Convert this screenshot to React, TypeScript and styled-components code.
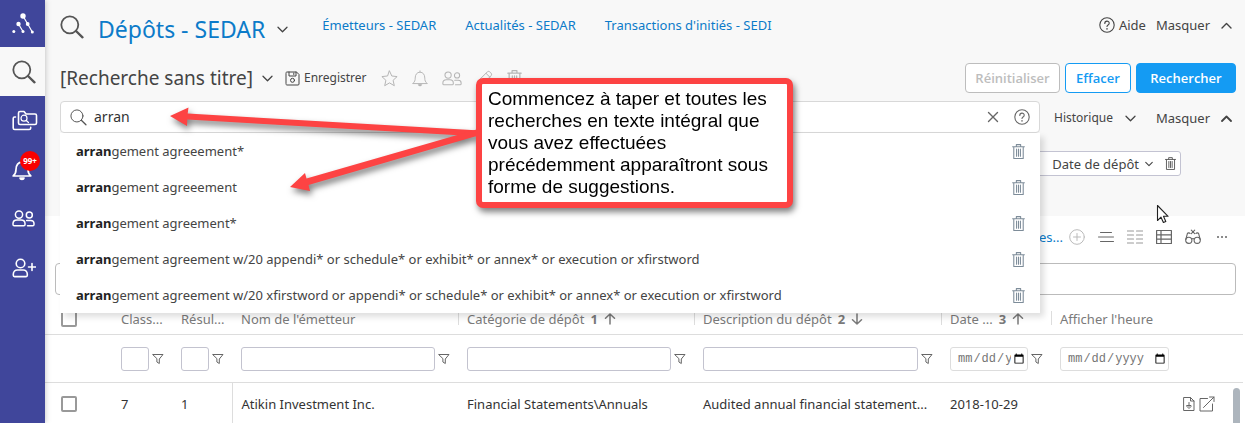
import React, { useState } from "react";
import styled, { createGlobalStyle, css } from "styled-components";

const ui = `"Noto Sans", "Open Sans", sans-serif`;

const GlobalStyle = createGlobalStyle`
  *, *::before, *::after { box-sizing: border-box; }
  body { margin: 0; background: #fff; color: #444; font: 13px/18px ${ui}; }
  button, input { font: inherit; color: inherit; margin: 0; }
  a { text-decoration: none; }
`;

const Shell = styled.div`
  display: flex;
  height: 100vh;
  overflow: hidden;
`;

/* ---------- sidebar ---------- */

const Sidebar = styled.nav`
  display: flex;
  flex-direction: column;
  flex: none;
  width: 45px;
  background: #40469b;
  box-shadow: 0 0 6px rgba(0, 0, 0, 0.25);
  z-index: 1;
`;

const SideItem = styled.a<{ $active?: boolean }>`
  position: relative;
  display: flex;
  align-items: center;
  padding-left: 12px;
  height: 49px;
  color: ${(p) => (p.$active ? "#555" : "#fff")};
  background: ${(p) => (p.$active ? "#f8f8f8" : "transparent")};
  &:first-child { height: 47px; }
`;

const Badge = styled.span`
  position: absolute;
  top: 6px;
  left: 20px;
  width: 20px;
  height: 20px;
  border-radius: 50%;
  background: #f80000;
  color: #fff;
  font-size: 8px;
  font-weight: 700;
  line-height: 20px;
  text-align: center;
`;

/* ---------- main area ---------- */

const Main = styled.main`
  position: relative;
  display: flex;
  flex: 1;
  flex-direction: column;
  min-width: 0;
`;

const SearchPanel = styled.section`
  flex: none;
  background: #f8f8f8;
  padding: 8px 9px 40px 15px;
`;

const TopBar = styled.header`
  display: flex;
  align-items: flex-start;
  height: 50px;
`;

const Title = styled.h1`
  margin: 0 3px 0 14px;
  color: #0c7bc9;
  font-size: 23px;
  font-weight: 400;
  line-height: 42px;
  white-space: nowrap;
`;

const TitleIcon = styled.span`
  display: flex;
  align-items: center;
  height: 38px;
  color: #555;
`;

const ChevronButton = styled.button<{ $height: number }>`
  display: flex;
  align-items: center;
  height: ${(p) => p.$height}px;
  padding: 0;
  margin-left: 9px;
  border: 0;
  background: none;
`;

const TopLinks = styled.nav`
  display: flex;
  gap: 29px;
  margin-left: 34px;
  line-height: 34px;
  white-space: nowrap;
  a { color: #0c7bc9; }
`;

const TopRight = styled.div`
  display: flex;
  gap: 10px;
  margin-left: auto;
  padding-right: 4px;
  height: 34px;
`;

const TextButton = styled.button<{ $gap?: number; $small?: boolean }>`
  display: flex;
  align-items: center;
  gap: ${(p) => p.$gap ?? 4}px;
  padding: 0;
  border: 0;
  background: none;
  color: #444;
  font-size: ${(p) => (p.$small ? 12 : 13)}px;
  white-space: nowrap;
`;

const RecordBar = styled.div`
  display: flex;
  align-items: center;
  height: 40px;
`;

const RecordName = styled.h2`
  margin: 0;
  font-size: 19px;
  font-weight: 400;
  line-height: 26px;
  white-space: nowrap;
`;

const RecordTools = styled.div`
  display: flex;
  align-items: center;
  gap: 14px;
  margin-left: 12px;
`;

const IconButton = styled.button<{ $color?: string }>`
  display: flex;
  align-items: center;
  justify-content: center;
  flex: none;
  padding: 0;
  border: 0;
  background: none;
  color: ${(p) => p.$color ?? "#666"};
`;

const Actions = styled.div`
  display: flex;
  gap: 5px;
  margin-left: auto;
`;

const actionKinds = {
  muted: css`border-color: #bdbdbd; color: #bdbdbd; background: #fff; width: 95px;`,
  outline: css`border-color: #149bf3; color: #149bf3; background: #fff; width: 66px;`,
  primary: css`border-color: #149bf3; color: #fff; background: #149bf3; width: 100px;`,
};

const ActionButton = styled.button<{ $kind: keyof typeof actionKinds }>`
  height: 30px;
  padding: 0;
  border: 1px solid;
  border-radius: 4px;
  font-family: "Open Sans", sans-serif;
  font-weight: 600;
  ${(p) => actionKinds[p.$kind]}
`;

const SearchRow = styled.div`
  display: flex;
  align-items: center;
  margin-top: 3px;
`;

const SearchField = styled.div`
  position: relative;
  display: flex;
  align-items: center;
  flex: 1;
  height: 32px;
  padding: 0 9px;
  border: 1px solid #d8d8d8;
  border-radius: 4px;
  background: #fff;
  color: #555;
`;

const SearchInput = styled.input`
  flex: 1;
  min-width: 0;
  padding: 0 7px;
  border: 0;
  outline: 0;
  background: none;
  font-size: 14px;
  color: #333;
`;

const FieldButtons = styled.div`
  display: flex;
  align-items: center;
  gap: 15px;
`;

const Suggestions = styled.ul`
  position: absolute;
  top: 31px;
  left: -1px;
  right: -1px;
  z-index: 2;
  margin: 0;
  padding: 0;
  list-style: none;
  background: #fff;
  box-shadow: 4px 4px 6px rgba(0, 0, 0, 0.13);
`;

const Suggestion = styled.li`
  display: flex;
  align-items: center;
  justify-content: space-between;
  height: 36px;
  padding: 0 15px 0 16px;
  color: #444;
  white-space: nowrap;
  b { color: #222; font-weight: 700; }
`;

const SearchSide = styled.div`
  display: flex;
  flex: none;
  align-items: center;
  justify-content: space-between;
  width: 182px;
  margin-left: 14px;
  padding: 2px 4px 0 0;
`;

const FilterRow = styled.div`
  display: flex;
  justify-content: flex-end;
  margin-top: 18px;
  padding-right: 55px;
`;

const FilterChip = styled.div`
  display: flex;
  align-items: center;
  justify-content: flex-end;
  width: 160px;
  height: 25px;
  padding: 0 4px;
  border: 1px solid #c3c3d2;
  border-radius: 3px;
  background: #fff;
  gap: 12px;
`;

/* ---------- results ---------- */

const ResultsBar = styled.div`
  display: flex;
  flex: none;
  align-items: center;
  justify-content: flex-end;
  gap: 13px;
  height: 42px;
  margin-bottom: 5px;
  padding-right: 15px;
`;

const ResultsLink = styled.a`
  margin-right: -7px;
  color: #0c7bc9;
`;

const ResultsInput = styled.input`
  flex: none;
  height: 32px;
  margin: 0 9px 0 10px;
  border: 1px solid #bbb;
  border-radius: 4px;
  background: #fff;
`;

const GridWrap = styled.div`
  position: relative;
  flex: 1;
  min-height: 0;
  margin: 7px 2px 0 0;
  overflow: hidden;
`;

const ScrollThumb = styled.div`
  position: absolute;
  top: 86px;
  right: 3px;
  bottom: -8px;
  width: 7px;
  border-radius: 4px;
  background: #adb5bd;
`;

const Grid = styled.table`
  width: 100%;
  border-collapse: collapse;
  table-layout: fixed;
  th, td { padding: 0 0 0 9px; text-align: left; white-space: nowrap; overflow: hidden; }
  th { padding-top: 3px; }
  th:first-child, td:first-child { padding-left: 16px; }
`;

const HeadRow = styled.tr`
  height: 32px;
  border-bottom: 1px solid #ddd;
  color: #7a7a7a;
  th { font-weight: 400; }
`;

const HeadCell = styled.th<{ $divider?: boolean }>`
  ${(p) =>
    p.$divider &&
    css`
      background: linear-gradient(#ddd, #ddd) left center / 1px 14px no-repeat;
    `}
`;

const HeadLabel = styled.span`
  display: flex;
  align-items: center;
  gap: 6px;
  b { font-weight: 700; }
`;

const FilterTr = styled.tr`
  height: 48px;
  border-bottom: 1px solid #ddd;
  td { padding-top: 2px; }
`;

const FilterCell = styled.div`
  display: flex;
  align-items: center;
  gap: 3px;
  color: #666;
`;

const FilterInput = styled.input<{ $width: number }>`
  flex: none;
  width: ${(p) => p.$width}px;
  height: 24px;
  padding: 0 4px;
  border: 1px solid #c3c3cf;
  border-radius: 3px;
  background: #fff;
`;

const DateInput = styled(FilterInput)`
  padding: 0 0 0 6px;
  border-color: #ddd;
  color: #757575;
  font: 12px "Liberation Mono", monospace;
`;

const DataRow = styled.tr`
  height: 43px;
  color: #333;
  td:nth-child(3) { border-right: 1px solid #ddd; }
`;

const RowActions = styled.div`
  display: flex;
  justify-content: flex-end;
  gap: 4px;
  padding-right: 28px;
`;

const Check = styled.input`
  display: block;
  appearance: none;
  width: 16px;
  height: 16px;
  border: 2px solid #999;
  border-radius: 2px;
  background: #fff;
`;

/* ---------- annotation ---------- */

const Annotation = styled.aside`
  position: absolute;
  top: 78px;
  left: 115px;
  z-index: 3;
  display: flex;
  filter: drop-shadow(2px 4px 3px rgba(0, 0, 0, 0.5));
  pointer-events: none;
`;

const Arrows = styled.svg`
  margin-right: -45px;
`;

const Callout = styled.p`
  width: 317px;
  margin: 0;
  padding: 4px 6px;
  border: 6px solid #fd4343;
  border-radius: 7px;
  background: #fff;
  color: #000;
  font: 19px/22px "Liberation Sans", Arial, sans-serif;
`;

const Pointer = styled.svg`
  position: absolute;
  top: 204px;
  left: 1111px;
  z-index: 4;
`;

/* ---------- icons ---------- */

type IconProps = { w: number; h?: number; vb?: string; sw?: number; children: React.ReactNode };
const Icon = ({ w, h = w, vb, sw = 1, children }: IconProps) => (
  <svg width={w} height={h} viewBox={vb ?? `0 0 ${w} ${h}`} fill="none" stroke="currentColor" strokeWidth={sw} strokeLinecap="round" strokeLinejoin="round" aria-hidden="true">
    {children}
  </svg>
);

const SearchIcon = ({ size, sw }: { size: number; sw: number }) => (
  <Icon w={size} vb="0 0 24 24" sw={sw}>
    <circle cx="9.8" cy="9.8" r="8.5" />
    <path d="M16 16l6.500 6.300" strokeWidth={sw * 1.3} />
  </Icon>
);
const Chevron = ({ up, size = 11, sw = 1.3 }: { up?: boolean; size?: number; sw?: number }) => (
  <Icon w={size} vb="0 0 11 11" sw={sw}>
    <path d={up ? "M1 8l4.5-4.5L10 8" : "M1 3.2l4.5 4.5L10 3.2"} />
  </Icon>
);
const HelpIcon = () => (
  <Icon w={16} sw={1.1}>
    <circle cx="8" cy="8" r="7.2" />
    <path d="M5.8 6.4c0-3 4.400-2.900 4.400-.2 0 1.800-2.200 1.700-2.200 3.300" />
    <path d="M8 11.700v.2" strokeWidth="1.500" />
  </Icon>
);
const TrashIcon = ({ w = 12, h = 14 }: { w?: number; h?: number }) => (
  <Icon w={w} h={h} vb="0 0 12 14">
    <path d="M.5 2.600h11M4 2.400V.6h4v1.800M1.600 2.800v10.700h8.800V2.800M4.200 4.800v6.600M6 4.800v6.600M7.800 4.800v6.600" />
  </Icon>
);
const PeopleIcon = ({ w, h, sw }: { w: number; h: number; sw: number }) => (
  <Icon w={w} h={h} vb="0 0 23 17" sw={sw}>
    <circle cx="7" cy="4.600" r="3.600" />
    <circle cx="17.300" cy="5" r="3" />
    <path d="M1 13.600C1 11 3 9.900 5 9.900h4c2 0 4 1.200 4 3.700v.9c0 .8-.4 1.300-1.200 1.300H2.200c-.8 0-1.200-.5-1.200-1.300z" />
    <path d="M14.600 10.400h4c2 0 3.400 1.200 3.400 3.200v.9c0 .8-.4 1.300-1.200 1.300h-5.300" />
  </Icon>
);
const BellIcon = ({ w, h, sw }: { w: number; h: number; sw: number }) => (
  <Icon w={w} h={h} vb="0 0 20 21" sw={sw}>
    <path d="M1.200 16.500c2.300-2 2.800-3.500 2.800-6.500C4 5.500 6.300 2.600 10 2.600s6 2.900 6 7.400c0 3 .5 4.500 2.800 6.500zM10 2.400V1" />
    <path d="M8 18.600c.3 1.600 3.700 1.600 4 0z" fill="currentColor" />
  </Icon>
);
const FunnelIcon = () => (
  <Icon w={12} h={12}>
    <path d="M1 1.500h10L7.300 6v4.500L4.900 9V6z" />
  </Icon>
);
const SortIcon = ({ down }: { down?: boolean }) => (
  <Icon w={12} h={12} sw={1.5}>
    <path d={down ? "M6 1v10M1.500 6.800L6 11l4.500-4.200" : "M6 11V1M1.500 5.200L6 1l4.500 4.200"} />
  </Icon>
);

const suggestions = [
  "gement agreeement*",
  "gement agreeement",
  "gement agreement*",
  "gement agreement w/20 appendi* or schedule* or exhibit* or annex* or execution or xfirstword",
  "gement agreement w/20 xfirstword or appendi* or schedule* or exhibit* or annex* or execution or xfirstword",
];

const columnWidths = [67, 60, 60, 226, 236, 247, 110, 121];

export default function App() {
  const [query, setQuery] = useState("arran");
  return (
    <>
      <GlobalStyle />
      <Shell>
        <Sidebar>
          <SideItem href="#" aria-label="Accueil">
            <Icon w={24} h={24} sw={1.2}>
              <g fill="currentColor" stroke="none">
                <circle cx="11" cy="4" r="2.700" />
                <circle cx="6.500" cy="12" r="2.200" />
                <circle cx="15.700" cy="12" r="1.900" />
                <circle cx="1.800" cy="19.500" r="1.500" />
                <circle cx="11" cy="19.500" r="1.500" />
                <circle cx="20.300" cy="20" r="1.500" />
              </g>
              <path d="M11 4l4.700 8 4.600 8M6.500 12l4.500 7.500" />
            </Icon>
          </SideItem>
          <SideItem href="#" $active aria-label="Recherche"><SearchIcon size={24} sw={1.8} /></SideItem>
          <SideItem href="#" aria-label="Dossiers">
            <Icon w={26} h={22} sw={1.6}>
              <path d="M6.500 3c0-1 .5-1.500 1.500-1.500h4l2 2.500h9c1 0 1.500.5 1.500 1.500V13c0 1-.5 1.500-1.500 1.500H8c-1 0-1.500-.5-1.500-1.500z" />
              <path d="M3.500 7H2.700C1.700 7 1.200 7.500 1.200 8.500V18c0 1 .5 1.500 1.500 1.500h14.500c1 0 1.500-.5 1.500-1.500v-.6" />
              <circle cx="12" cy="8.200" r="3" strokeWidth="1.200" />
              <path d="M14.300 10.500l2.200 2" strokeWidth="1.200" />
            </Icon>
          </SideItem>
          <SideItem href="#" aria-label="Alertes">
            <BellIcon w={20} h={22} sw={1.7} />
            <Badge>99+</Badge>
          </SideItem>
          <SideItem href="#" aria-label="Groupes"><PeopleIcon w={23} h={17} sw={1.5} /></SideItem>
          <SideItem href="#" aria-label="Ajouter un utilisateur">
            <Icon w={24} h={20} sw={1.6}>
              <circle cx="8.500" cy="5.500" r="4.300" />
              <path d="M1.300 16.300c0-2.700 2-4.300 4-4.300h6c2 0 4 1.600 4 4.300v1c0 .8-.4 1.300-1.200 1.300H2.500c-.8 0-1.200-.5-1.200-1.300zM20 5.500v7M16.500 9h7" />
            </Icon>
          </SideItem>
        </Sidebar>

        <Main>
          <SearchPanel>
            <TopBar>
              <TitleIcon><SearchIcon size={24} sw={1.8} /></TitleIcon>
              <Title>Dépôts - SEDAR</Title>
              <ChevronButton $height={43} aria-label="Changer de type"><Chevron /></ChevronButton>
              <TopLinks>
                <a href="#">Émetteurs - SEDAR</a>
                <a href="#">Actualités - SEDAR</a>
                <a href="#">Transactions d'initiés - SEDI</a>
              </TopLinks>
              <TopRight>
                <TextButton><HelpIcon />Aide</TextButton>
                <TextButton $gap={11}>Masquer<Chevron up sw={1.4} /></TextButton>
              </TopRight>
            </TopBar>

            <RecordBar>
              <RecordName>[Recherche sans titre]</RecordName>
              <ChevronButton $height={38} aria-label="Recherches enregistrées"><Chevron /></ChevronButton>
              <RecordTools>
                <TextButton $small>
                  <Icon w={15} h={15}>
                    <path d="M1 2c0-.7.3-1 1-1h9.500L14 3.500V13c0 .7-.3 1-1 1H2c-.7 0-1-.3-1-1zM4 1v4h7V1M8.800 2v1.500" />
                    <circle cx="7.500" cy="9.300" r="2" />
                  </Icon>
                  Enregistrer
                </TextButton>
                <IconButton $color="#b5b5b5" aria-label="Favori">
                  <Icon w={17} h={17}>
                    <path d="M8.500 1l2.300 5 5.300.6-4 3.700 1.200 5.400-4.800-2.800-4.800 2.800 1.200-5.400-4-3.700 5.300-.6z" />
                  </Icon>
                </IconButton>
                <IconButton $color="#b5b5b5" aria-label="Alerte"><BellIcon w={16} h={17} sw={1.2} /></IconButton>
                <IconButton $color="#b5b5b5" aria-label="Partager"><PeopleIcon w={20} h={15} sw={1.2} /></IconButton>
                <IconButton $color="#b5b5b5" aria-label="Modifier">
                  <Icon w={17} h={17}>
                    <path d="M1 16l1.200-5L11.500 1.700c1.500-1.500 5.200 2.200 3.800 3.800L6 14.800zM10 3.300l3.800 3.800M2.300 11L6 14.700" />
                  </Icon>
                </IconButton>
                <IconButton $color="#b5b5b5" aria-label="Supprimer"><TrashIcon w={15} h={17} /></IconButton>
              </RecordTools>
              <Actions>
                <ActionButton $kind="muted">Réinitialiser</ActionButton>
                <ActionButton $kind="outline">Effacer</ActionButton>
                <ActionButton $kind="primary">Rechercher</ActionButton>
              </Actions>
            </RecordBar>

            <SearchRow>
              <SearchField>
                <SearchIcon size={17} sw={1.4} />
                <SearchInput aria-label="Recherche en texte intégral" value={query} onChange={(e) => setQuery(e.target.value)} />
                <FieldButtons>
                  <IconButton aria-label="Vider">
                    <Icon w={12} h={12} sw={1.4}><path d="M1.500 1.500l9 9M10.500 1.500l-9 9" /></Icon>
                  </IconButton>
                  <IconButton aria-label="Aide"><HelpIcon /></IconButton>
                </FieldButtons>
                <Suggestions>
                  {suggestions.map((s) => (
                    <Suggestion key={s}>
                      <span><b>arran</b>{s}</span>
                      <IconButton $color="#7d8c99" aria-label="Supprimer la suggestion"><TrashIcon w={13} h={15} /></IconButton>
                    </Suggestion>
                  ))}
                </Suggestions>
              </SearchField>
              <SearchSide>
                <TextButton $small $gap={12}>Historique<Chevron /></TextButton>
                <TextButton $gap={11}>Masquer<Chevron up sw={1.8} /></TextButton>
              </SearchSide>
            </SearchRow>

            <FilterRow>
              <FilterChip>
                <TextButton $gap={6}>Date de dépôt<Chevron size={8} sw={1.5} /></TextButton>
                <IconButton $color="#555" aria-label="Retirer le filtre"><TrashIcon w={11} h={13} /></IconButton>
              </FilterChip>
            </FilterRow>
          </SearchPanel>

          <ResultsBar>
            <ResultsLink href="#">es...</ResultsLink>
            <IconButton $color="#bbb" aria-label="Ajouter">
              <Icon w={16}><circle cx="8" cy="8" r="7.300" /><path d="M8 4.500v7M4.500 8h7" /></Icon>
            </IconButton>
            <IconButton aria-label="Liste">
              <Icon w={16}><path d="M2.500 3.500h11M.5 8h15M2.500 12.500h13" /></Icon>
            </IconButton>
            <IconButton $color="#999" aria-label="Colonnes">
              <Icon w={16} sw={1.2}><path d="M.5 2h6M.5 6h6M.5 10h6M.5 14h6M9.500 2h6M9.500 6h6M9.500 10h6M9.500 14h6" /></Icon>
            </IconButton>
            <IconButton aria-label="Tableau">
              <Icon w={16} sw={1.2}><path d="M.6 1.500h14.800v13H.6zM.6 5.800h14.800M.6 10.200h14.800M5 1.500v13" /></Icon>
            </IconButton>
            <IconButton aria-label="Surveiller">
              <Icon w={16} sw={1.1}>
                <circle cx="3.800" cy="11.300" r="3.100" />
                <circle cx="12.200" cy="11.300" r="3.100" />
                <path d="M.8 10.500L2.300 4.800c.5-1.200 2.200-1.200 2.700-.3M15.200 10.500l-1.500-5.700c-.5-1.200-2.200-1.200-2.700-.3M6.800 10c.8-.6 1.600-.6 2.400 0M6.300 1.200l3.400 3.400M9.700 1.200L6.300 4.600" />
              </Icon>
            </IconButton>
            <IconButton aria-label="Plus">
              <Icon w={16} sw={2}><path d="M4 8h.01M8 8h.01M12 8h.01" /></Icon>
            </IconButton>
          </ResultsBar>
          <ResultsInput aria-label="Filtrer les résultats" />

          <GridWrap>
            <Grid>
              <colgroup>
                {columnWidths.map((w, i) => <col key={i} width={w} />)}
                <col />
              </colgroup>
              <thead>
                <HeadRow>
                  <HeadCell><Check type="checkbox" aria-label="Tout sélectionner" /></HeadCell>
                  <HeadCell>Class...</HeadCell>
                  <HeadCell>Résul...</HeadCell>
                  <HeadCell>Nom de l'émetteur</HeadCell>
                  <HeadCell $divider><HeadLabel>Catégorie de dépôt <b>1</b><SortIcon /></HeadLabel></HeadCell>
                  <HeadCell $divider><HeadLabel>Description du dépôt <b>2</b><SortIcon down /></HeadLabel></HeadCell>
                  <HeadCell $divider><HeadLabel>Date ... <b>3</b><SortIcon /></HeadLabel></HeadCell>
                  <HeadCell $divider>Afficher l'heure</HeadCell>
                  <HeadCell />
                </HeadRow>
                <FilterTr>
                  <td />
                  <td><FilterCell><FilterInput $width={28} aria-label="Filtrer par classement" /><FunnelIcon /></FilterCell></td>
                  <td><FilterCell><FilterInput $width={28} aria-label="Filtrer par résultat" /><FunnelIcon /></FilterCell></td>
                  <td><FilterCell><FilterInput $width={194} aria-label="Filtrer par émetteur" /><FunnelIcon /></FilterCell></td>
                  <td><FilterCell><FilterInput $width={204} aria-label="Filtrer par catégorie" /><FunnelIcon /></FilterCell></td>
                  <td><FilterCell><FilterInput $width={215} aria-label="Filtrer par description" /><FunnelIcon /></FilterCell></td>
                  <td><FilterCell><DateInput type="date" $width={78} aria-label="Filtrer par date" /><FunnelIcon /></FilterCell></td>
                  <td><FilterCell><DateInput type="date" $width={109} aria-label="Filtrer par heure" /></FilterCell></td>
                  <td />
                </FilterTr>
              </thead>
              <tbody>
                <DataRow>
                  <td><Check type="checkbox" aria-label="Sélectionner la ligne" /></td>
                  <td>7</td>
                  <td>1</td>
                  <td>Atikin Investment Inc.</td>
                  <td>Financial Statements\Annuals</td>
                  <td>Audited annual financial statement...</td>
                  <td>2018-10-29</td>
                  <td />
                  <td>
                    <RowActions>
                      <IconButton aria-label="Télécharger">
                        <Icon w={12} h={16}><path d="M1 1.500h6.500l3.500 3.500v9.500H1zM7.500 1.500V5H11M6 6.500v4M4 9.500h4v1L6 12.500l-2-2z" /></Icon>
                      </IconButton>
                      <IconButton aria-label="Ouvrir">
                        <Icon w={16} h={16}><path d="M8.500 2.500H1v12.500h12.500V8M4.500 11.500L15 1M10.500 1H15v4.500" /></Icon>
                      </IconButton>
                    </RowActions>
                  </td>
                </DataRow>
              </tbody>
            </Grid>
            <ScrollThumb />
          </GridWrap>

          <Annotation>
            <Arrows width="361" height="130" viewBox="160 78 361 130" aria-hidden="true">
              <g fill="#fd4343">
                <path d="M170 116l18.500-8.500-.8 6L480 130.500v6L187.300 119.500l-.3 6.500z" />
                <path d="M290 187l15-14 1.500 5.500L480 128.500v6.500L308.500 185l1.500 6z" />
              </g>
            </Arrows>
            <Callout>
              Commencez à taper et toutes les recherches en texte intégral que vous avez effectuées précédemment apparaîtront sous forme de suggestions.
            </Callout>
          </Annotation>

          <Pointer width="13" height="20" viewBox="0 0 13 20" aria-hidden="true">
            <path d="M1.500 1.500v15l3.500-3.300 2.400 5.300 2.400-1-2.300-5.200h4.600z" fill="#fff" stroke="#222" strokeWidth="1.100" strokeLinejoin="round" />
          </Pointer>
        </Main>
      </Shell>
    </>
  );
}
